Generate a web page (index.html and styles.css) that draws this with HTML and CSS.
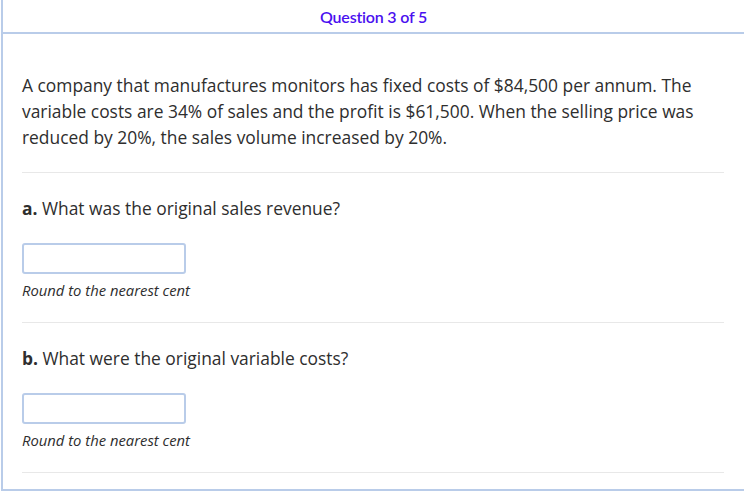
FILE: index.html
```html
<!DOCTYPE html>
<html>
<head>
<meta charset="utf-8">
<link rel="stylesheet" href="styles.css">
</head>
<body>
<div class="panel">
  <header class="panel-head">Question 3 of 5</header>
  <main class="panel-body">
    <p class="intro">A company that manufactures monitors has fixed costs of $84,500 per annum. The variable costs are 34% of sales and the profit is $61,500. When the selling price was reduced by 20%, the sales volume increased by 20%.</p>
    <section class="part">
      <p class="q"><b>a.</b> What was the original sales revenue?</p>
      <div class="answer"></div>
      <p class="hint">Round to the nearest cent</p>
    </section>
    <section class="part">
      <p class="q"><b>b.</b> What were the original variable costs?</p>
      <div class="answer"></div>
      <p class="hint">Round to the nearest cent</p>
    </section>
  </main>
</div>
</body>
</html>
```
FILE: styles.css
```css
html, body {
  margin: 0;
  padding: 0;
  background: #fff;
}
.panel {
  margin-left: 1px;
  height: 491px;
  box-sizing: border-box;
  border-left: 2px solid #b9cce9;
  border-bottom: 2px solid #b9cce9;
}
.panel-head {
  height: 32px;
  border-bottom: 2px solid #b9cce9;
  display: flex;
  align-items: center;
  justify-content: center;
  font-family: Lato, "Liberation Sans", sans-serif;
  font-size: 16px;
  font-weight: 600;
  color: #4a10f0;
  letter-spacing: -0.2px;
}
.panel-body {
  padding: 38px 20px 0 19px;
  font-family: "Open Sans", "Liberation Sans", sans-serif;
  color: #2e2e2e;
  font-size: 17.4px;
  line-height: 26px;
}
p { margin: 0; }
.intro {
  padding-bottom: 22px;
  border-bottom: 1px solid #e8e8e8;
}
.part {
  padding: 22px 0;
  border-bottom: 1px solid #e8e8e8;
}
.q b { font-weight: 700; }
.answer {
  margin-top: 22px;
  width: 160px;
  height: 27px;
  border: 2px solid #b9cce9;
  border-radius: 3px;
  background: #fff;
}
.hint {
  margin-top: 6px;
  font-style: italic;
  font-size: 14.8px;
  line-height: 20px;
}
```
